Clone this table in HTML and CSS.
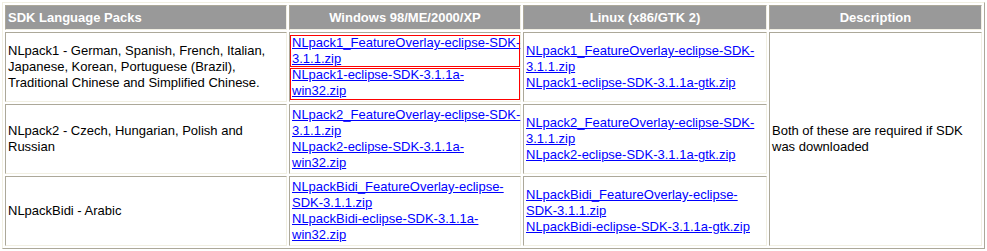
FILE: index.html
```html
<!DOCTYPE html>
<html lang="en">
<head>
<meta charset="utf-8">
<title>SDK Language Packs</title>
<link rel="stylesheet" href="styles.css">
</head>
<body>
<table class="packs">
  <tr>
    <th class="col-pack left">SDK Language Packs</th>
    <th class="col-win">Windows 98/ME/2000/XP</th>
    <th class="col-linux">Linux (x86/GTK 2)</th>
    <th class="col-desc">Description</th>
  </tr>
  <tr>
    <td>NLpack1 - German, Spanish, French, Italian, Japanese, Korean, Portuguese (Brazil), Traditional Chinese and Simplified Chinese.</td>
    <td class="dl">
      <a class="link box" href="#"><span class="nw">NLpack1_FeatureOverlay-eclipse-SDK-</span><wbr>3.1.1.zip</a>
      <a class="link box" href="#"><span class="nw">NLpack1-eclipse-SDK-3.1.1a-</span><wbr>win32.zip</a>
    </td>
    <td class="dl">
      <a class="link" href="#"><span class="nw">NLpack1_FeatureOverlay-eclipse-SDK-</span><wbr>3.1.1.zip</a>
      <a class="link" href="#">NLpack1-eclipse-SDK-3.1.1a-gtk.zip</a>
    </td>
    <td rowspan="3">Both of these are required if SDK was downloaded</td>
  </tr>
  <tr>
    <td>NLpack2 - Czech, Hungarian, Polish and Russian</td>
    <td class="dl">
      <a class="link" href="#"><span class="nw">NLpack2_FeatureOverlay-eclipse-SDK-</span><wbr>3.1.1.zip</a>
      <a class="link" href="#"><span class="nw">NLpack2-eclipse-SDK-3.1.1a-</span><wbr>win32.zip</a>
    </td>
    <td class="dl">
      <a class="link" href="#"><span class="nw">NLpack2_FeatureOverlay-eclipse-SDK-</span><wbr>3.1.1.zip</a>
      <a class="link" href="#">NLpack2-eclipse-SDK-3.1.1a-gtk.zip</a>
    </td>
  </tr>
  <tr>
    <td>NLpackBidi - Arabic</td>
    <td class="dl">
      <a class="link" href="#"><span class="nw">NLpackBidi_FeatureOverlay-eclipse-</span><wbr>SDK-3.1.1.zip</a>
      <a class="link" href="#"><span class="nw">NLpackBidi-eclipse-SDK-3.1.1a-</span><wbr>win32.zip</a>
    </td>
    <td class="dl">
      <a class="link" href="#"><span class="nw">NLpackBidi_FeatureOverlay-eclipse-</span><wbr>SDK-3.1.1.zip</a>
      <a class="link" href="#">NLpackBidi-eclipse-SDK-3.1.1a-gtk.zip</a>
    </td>
  </tr>
</table>
</body>
</html>
```

FILE: styles.css
```css
html, body {
  margin: 0;
  background: #ffffff;
}

body {
  padding: 2px;
  font-family: "Liberation Sans", Arial, sans-serif;
  font-size: 13px;
  line-height: 16px;
  color: #000000;
}

.packs {
  width: 983px;
  table-layout: fixed;
  border-collapse: separate;
  border-spacing: 2px;
  border: 1px solid;
  border-color: #f1efe2 #aca899 #aca899 #f1efe2;
  background: #ffffff;
}

.packs th,
.packs td {
  border: 1px solid;
  border-color: #aca899 #f1efe2 #f1efe2 #aca899;
  padding: 2px;
  vertical-align: middle;
  text-align: left;
  font-weight: normal;
}

.packs th {
  padding: 4px 2px 3px;
  background: #999999;
  color: #ffffff;
  font-weight: bold;
  text-align: center;
}

.packs th.left {
  text-align: left;
}

.col-pack { width: 276px; }
.col-win { width: 226px; }
.col-linux { width: 238px; }
.col-desc { width: 207px; }

.link {
  display: block;
  color: #0000ff;
  text-decoration: underline;
}

.nw {
  white-space: nowrap;
}

.box {
  position: relative;
  margin: 0 -2px;
  padding: 0 2px;
}

.box::after {
  content: "";
  position: absolute;
  top: 0;
  right: 0;
  bottom: 0;
  left: 0;
  border: 1px solid #ff0000;
  pointer-events: none;
}

.box + .box::after {
  top: 1px;
  bottom: -1px;
}
```
